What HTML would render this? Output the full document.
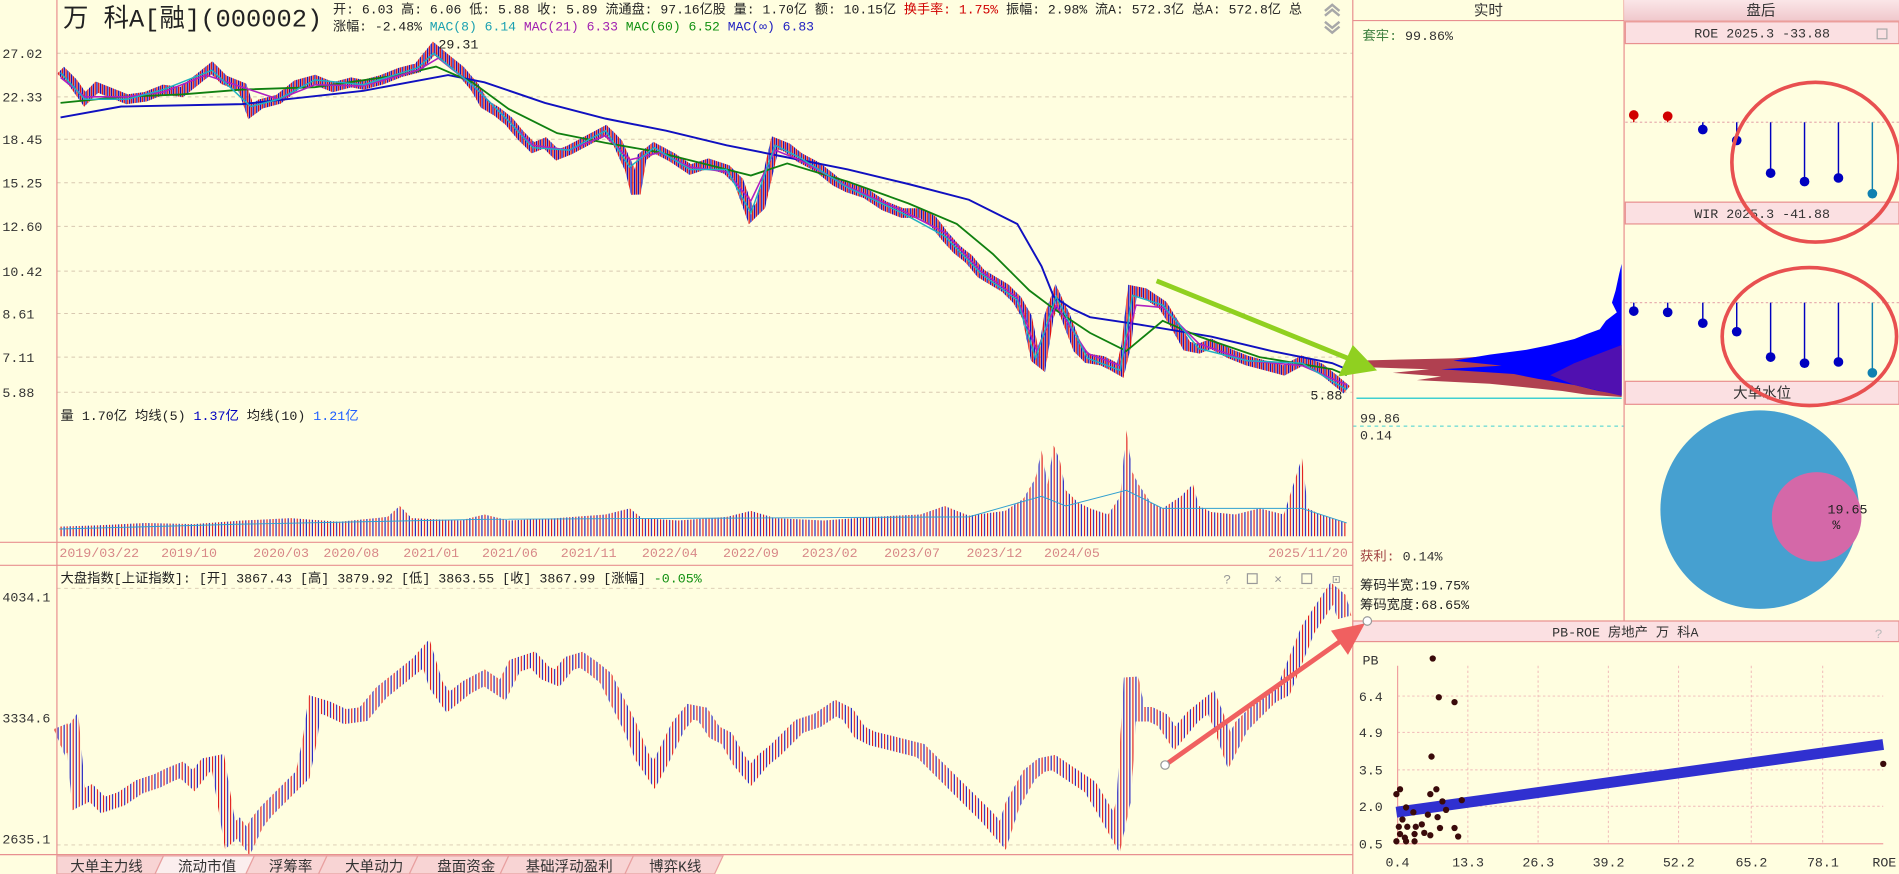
<!DOCTYPE html>
<html><head><meta charset="utf-8"><style>
html,body{margin:0;padding:0;background:#fffee0;overflow:hidden}
svg{display:block}
text{font-family:"Liberation Mono","Noto Sans CJK SC",monospace}
</style></head><body>
<svg width="1899" height="874" viewBox="0 0 1568 722" preserveAspectRatio="none" xmlns="http://www.w3.org/2000/svg">
<defs>
<pattern id="st" patternUnits="userSpaceOnUse" x="0" y="0" width="3" height="722"><rect x="0" y="0" width="1.1" height="722" fill="#e01010"/><rect x="1.5" y="0" width="1.1" height="722" fill="#1010c0"/></pattern>
<pattern id="st2" patternUnits="userSpaceOnUse" x="0" y="0" width="5" height="722"><rect x="0" y="0" width="0.9" height="722" fill="#e01010"/><rect x="2.5" y="0" width="0.9" height="722" fill="#1010c0"/></pattern>
<linearGradient id="pk" x1="0" y1="0" x2="0" y2="1"><stop offset="0" stop-color="#fbe6e8"/><stop offset="1" stop-color="#f0c8cc"/></linearGradient>
</defs>
<rect width="1568" height="722" fill="#fffee0"/>
<g stroke="#d8c8b0" stroke-dasharray="3,3" stroke-width="0.8">
<line x1="47" y1="44" x2="1117" y2="44"/><line x1="47" y1="80" x2="1117" y2="80"/><line x1="47" y1="115" x2="1117" y2="115"/><line x1="47" y1="151" x2="1117" y2="151"/><line x1="47" y1="187" x2="1117" y2="187"/><line x1="47" y1="224" x2="1117" y2="224"/><line x1="47" y1="259" x2="1117" y2="259"/><line x1="47" y1="295" x2="1117" y2="295"/><line x1="47" y1="324" x2="1117" y2="324"/>
<line x1="47" y1="486" x2="1117" y2="486"/><line x1="47" y1="698" x2="1117" y2="698"/>
<line x1="1117" y1="352" x2="1341" y2="352" stroke="#40d0d0"/>
</g>
<g font-size="11" fill="#333">
<text x="2" y="48">27.02</text><text x="2" y="84">22.33</text><text x="2" y="119">18.45</text><text x="2" y="155">15.25</text><text x="2" y="191">12.60</text><text x="2" y="228">10.42</text><text x="2" y="263">8.61</text><text x="2" y="299">7.11</text><text x="2" y="328">5.88</text>
<text x="2" y="497">4034.1</text><text x="2" y="597">3334.6</text><text x="2" y="697">2635.1</text>
</g>
<path d="M50 58 L60 68 L70 82 L80 72 L90 76 L105 82 L120 80 L135 74 L150 76 L165 64 L175 56 L185 66 L200 72 L207 92 L215 86 L230 82 L245 70 L260 66 L275 72 L290 68 L300 70 L315 66 L330 60 L345 56 L358 40 L370 50 L380 58 L392 72 L400 86 L410 92 L420 100 L430 112 L440 122 L450 118 L460 128 L470 124 L485 116 L500 108 L510 118 L520 140 L525 160 L530 130 L540 122 L555 130 L570 140 L585 135 L600 140 L610 150 L620 178 L628 170 L640 118 L650 122 L660 130 L675 138 L690 150 L700 155 L715 160 L730 170 L745 176 L760 176 L770 182 L780 195 L790 206 L800 214 L810 226 L820 232 L830 238 L840 248 L848 262 L855 296 L860 300 L866 262 L872 245 L880 262 L890 288 L898 296 L910 298 L918 302 L925 306 L930 285 L935 240 L945 242 L960 252 L970 268 L980 286 L990 288 L1000 284 L1015 292 L1030 298 L1045 302 L1060 306 L1075 298 L1090 304 L1100 312 L1112 322" stroke="url(#st)" stroke-width="8" fill="none"/>
<polyline points="50,97 100,88 200,86 300,75 370,62 400,68 450,85 500,98 550,108 600,120 650,130 700,140 750,152 800,165 840,185 860,220 870,245 885,255 900,262 940,268 1000,278 1050,290 1100,300 1112,305" stroke="#1010c0" stroke-width="1.6" fill="none"/>
<polyline points="50,85 100,80 150,78 200,74 260,72 330,62 360,55 390,68 420,90 460,110 500,118 540,125 580,135 620,145 650,135 700,150 750,168 790,185 820,210 850,240 870,255 900,275 930,290 960,265 990,278 1040,295 1100,305 1112,310" stroke="#108010" stroke-width="1.5" fill="none"/>
<polyline points="50,64 70,80 105,80 135,76 170,62 200,72 230,82 260,70 300,71 345,58 362,48 392,72 420,100 440,120 470,124 500,112 520,132 545,126 570,138 600,142 620,166 640,124 660,132 700,154 745,174 780,192 810,224 840,246 856,290 872,252 898,292 925,302 938,252 960,254 990,284 1030,298 1075,302 1112,318" stroke="#b020c0" stroke-width="1.3" fill="none"/>
<polyline points="50,60 70,82 105,82 135,74 175,58 207,88 230,82 260,66 300,70 345,56 358,44 392,72 420,100 440,122 470,124 500,108 520,138 540,122 570,140 600,140 620,176 640,120 660,130 700,155 745,176 780,195 810,226 840,248 855,296 872,245 898,296 925,306 935,244 960,252 990,288 1030,298 1075,300 1112,322" stroke="#20b0c0" stroke-width="1.2" fill="none"/>
<polygon points="49,435 80,434 120,432 160,433 200,430 240,428 280,431 320,427 330,418 340,428 380,430 400,425 420,430 460,428 500,425 520,420 530,428 560,430 600,427 620,422 640,428 680,430 720,427 760,425 780,418 800,426 830,422 845,412 855,395 860,372 865,400 870,368 875,380 880,405 890,415 900,420 915,425 925,410 930,355 935,390 940,400 950,415 960,420 975,410 985,400 990,418 1000,423 1020,425 1040,420 1060,425 1075,378 1080,420 1090,425 1100,428 1112,432 1112,443 49,443" fill="url(#st2)"/>
<polyline points="49,437 200,433 400,429 600,428 800,427 860,410 880,418 930,405 960,420 1075,420 1112,432" stroke="#30a0d0" stroke-width="0.8" fill="none"/>
<path d="M50 600 L55 612 L60 605 L65 660 L75 655 L85 665 L100 660 L115 650 L130 645 L140 640 L150 636 L160 645 L170 632 L180 630 L185 660 L190 690 L197 684 L205 695 L212 680 L220 670 L235 655 L250 640 L256 610 L260 582 L270 585 L285 592 L300 590 L315 572 L330 560 L345 548 L352 540 L360 566 L370 580 L385 568 L400 560 L415 570 L425 550 L440 545 L450 556 L460 560 L470 548 L480 545 L490 552 L500 560 L510 580 L520 600 L530 625 L540 640 L548 625 L560 600 L570 588 L580 590 L590 605 L600 610 L610 628 L620 640 L630 628 L640 620 L650 610 L660 600 L675 595 L690 585 L700 590 L710 605 L720 610 L740 615 L760 620 L775 635 L790 650 L800 660 L815 675 L828 690 L836 665 L850 640 L860 632 L870 630 L885 640 L900 650 L912 670 L922 688 L928 660 L934 560 L940 590 L950 590 L960 595 L970 610 L985 592 L1000 580 L1008 600 L1015 620 L1025 600 L1040 585 L1050 575 L1060 570 L1070 545 L1080 520 L1090 505 L1100 490 L1106 495 L1110 510" stroke="url(#st2)" stroke-width="12" fill="none"/>
<polygon points="1339,288 1290,290 1250,293 1200,296 1117,298 1117,303 1180,305 1150,308 1190,311 1170,314 1230,317 1260,320 1290,323 1310,326 1339,328" fill="#b04050"/>
<polygon points="1339,218 1337,226 1334,240 1331,250 1335,258 1326,265 1321,272 1310,276 1300,280 1280,285 1260,289 1230,293 1200,298 1240,302 1190,305 1250,309 1270,313 1300,318 1320,323 1339,326" fill="#0000ff"/>
<polygon points="1339,285 1300,300 1280,310 1300,318 1330,325 1339,327" fill="#5010b0"/>
<line x1="1120" y1="329" x2="1339" y2="329" stroke="#40d0d0" stroke-width="1.2"/>
<g stroke="#e89090" stroke-width="1" fill="none">
<line x1="47" y1="0" x2="47" y2="722"/><line x1="1117" y1="0" x2="1117" y2="722"/><line x1="1341" y1="0" x2="1341" y2="513"/>
<line x1="0" y1="448" x2="1117" y2="448"/><line x1="0" y1="467" x2="1117" y2="467"/><line x1="0" y1="706" x2="1117" y2="706"/><line x1="1117" y1="17" x2="1568" y2="17"/>
</g>
<text x="52" y="22" font-size="21" fill="#222" font-family="Liberation Serif,Noto Serif CJK SC,serif">万 科A[融](000002)</text>
<text x="275" y="11" font-size="10.8" fill="#222" textLength="800" lengthAdjust="spacingAndGlyphs">开: 6.03 高: 6.06 低: 5.88 收: 5.89 流通盘: 97.16亿股 量: 1.70亿 额: 10.15亿 <tspan fill="#d00000">换手率: 1.75%</tspan> 振幅: 2.98% 流A: 572.3亿 总A: 572.8亿 总</text>
<text x="275" y="25" font-size="10.8" fill="#222">涨幅: -2.48% <tspan fill="#1aa0b0">MAC(8) 6.14</tspan> <tspan fill="#a020b0">MAC(21) 6.33</tspan> <tspan fill="#109010">MAC(60) 6.52</tspan> <tspan fill="#2020c0">MAC(∞) 6.83</tspan></text>
<text x="362" y="40" font-size="11" fill="#222">29.31</text>
<text x="1082" y="330" font-size="11" fill="#222">5.88</text>
<g stroke="#a8a8a8" stroke-width="2" fill="none"><path d="M1094 9 L1100 4 L1106 9 M1094 13 L1100 8 L1106 13"/><path d="M1094 18 L1100 23 L1106 18 M1094 22 L1100 27 L1106 22"/></g>
<text x="50" y="347" font-size="11" fill="#222">量 1.70亿 均线(5) <tspan fill="#0000c0">1.37亿</tspan> 均线(10) <tspan fill="#2060ff">1.21亿</tspan></text>
<g font-size="11" fill="#d88888">
<text x="49" y="460">2019/03/22</text><text x="133" y="460">2019/10</text><text x="209" y="460">2020/03</text><text x="267" y="460">2020/08</text><text x="333" y="460">2021/01</text><text x="398" y="460">2021/06</text><text x="463" y="460">2021/11</text><text x="530" y="460">2022/04</text><text x="597" y="460">2022/09</text><text x="662" y="460">2023/02</text><text x="730" y="460">2023/07</text><text x="798" y="460">2023/12</text><text x="862" y="460">2024/05</text><text x="1047" y="460">2025/11/20</text>
</g>
<text x="50" y="481" font-size="11" fill="#222">大盘指数[上证指数]: [开] 3867.43 [高] 3879.92 [低] 3863.55 [收] 3867.99 [涨幅] <tspan fill="#109010">-0.05%</tspan></text>
<g font-size="11" fill="#999"><text x="1010" y="482">?</text><rect x="1030" y="474" width="8" height="8" fill="none" stroke="#999"/><text x="1052" y="482">×</text><rect x="1075" y="474" width="8" height="8" fill="none" stroke="#999"/><text x="1100" y="482">⊡</text></g>
<g font-size="12" fill="#333">
<path d="M47 707 H135 L128 722 H47 Z" fill="#f8d4d4" stroke="#e8a0a0"/>
<path d="M135 707 H210 L203 722 H128 Z" fill="#fbeeee" stroke="#e8a0a0"/>
<path d="M210 707 H270 L263 722 H203 Z" fill="#f8d4d4" stroke="#e8a0a0"/>
<path d="M270 707 H345 L338 722 H263 Z" fill="#f8d4d4" stroke="#e8a0a0"/>
<path d="M345 707 H420 L413 722 H338 Z" fill="#f8d4d4" stroke="#e8a0a0"/>
<path d="M420 707 H523 L516 722 H413 Z" fill="#f8d4d4" stroke="#e8a0a0"/>
<path d="M523 707 H597 L590 722 H516 Z" fill="#f8d4d4" stroke="#e8a0a0"/>
<text x="58" y="720">大单主力线</text><text x="147" y="720">流动市值</text><text x="222" y="720">浮筹率</text><text x="285" y="720">大单动力</text><text x="361" y="720">盘面资金</text><text x="434" y="720">基础浮动盈利</text><text x="536" y="720">博弈K线</text>
</g>
<rect x="1341" y="0" width="227" height="17" fill="url(#pk)"/>
<text x="1229" y="13" text-anchor="middle" font-size="12" fill="#333">实时</text>
<text x="1454" y="13" text-anchor="middle" font-size="12" fill="#333">盘后</text>
<g stroke="#e89090" fill="#fbe0e2">
<rect x="1342" y="18" width="226" height="18"/><rect x="1342" y="167" width="226" height="18"/><rect x="1342" y="315" width="226" height="19"/><rect x="1117" y="513" width="451" height="17"/>
</g>
<g font-size="11" fill="#333" text-anchor="middle">
<text x="1455" y="31">ROE 2025.3 -33.88</text><text x="1455" y="180">WIR 2025.3 -41.88</text><text x="1455" y="329" font-size="12">大单水位</text><text x="1342" y="526">PB-ROE 房地产 万 科A</text>
</g>
<rect x="1550" y="24" width="8" height="8" fill="none" stroke="#aaa"/>
<text x="1548" y="527" font-size="11" fill="#bbb">?</text>
<g stroke="#e8b0b0" stroke-dasharray="2,2"><line x1="1342" y1="101" x2="1568" y2="101"/><line x1="1342" y1="250" x2="1568" y2="250"/></g>
<g stroke-width="1.2">
<line x1="1349" y1="101" x2="1349" y2="95" stroke="#d00000"/><circle cx="1349" cy="95" r="4" fill="#d00000"/>
<line x1="1377" y1="101" x2="1377" y2="96" stroke="#d00000"/><circle cx="1377" cy="96" r="4" fill="#d00000"/>
<line x1="1406" y1="101" x2="1406" y2="107" stroke="#0000c0"/><circle cx="1406" cy="107" r="4" fill="#0000c0"/>
<line x1="1434" y1="101" x2="1434" y2="116" stroke="#0000c0"/><circle cx="1434" cy="116" r="4" fill="#0000c0"/>
<line x1="1462" y1="101" x2="1462" y2="143" stroke="#0000c0"/><circle cx="1462" cy="143" r="4" fill="#0000c0"/>
<line x1="1490" y1="101" x2="1490" y2="150" stroke="#0000c0"/><circle cx="1490" cy="150" r="4" fill="#0000c0"/>
<line x1="1518" y1="101" x2="1518" y2="147" stroke="#0000c0"/><circle cx="1518" cy="147" r="4" fill="#0000c0"/>
<line x1="1546" y1="101" x2="1546" y2="160" stroke="#1080b0"/><circle cx="1546" cy="160" r="4" fill="#1080b0"/>
<line x1="1349" y1="250" x2="1349" y2="257" stroke="#0000c0"/><circle cx="1349" cy="257" r="4" fill="#0000c0"/>
<line x1="1377" y1="250" x2="1377" y2="258" stroke="#0000c0"/><circle cx="1377" cy="258" r="4" fill="#0000c0"/>
<line x1="1406" y1="250" x2="1406" y2="267" stroke="#0000c0"/><circle cx="1406" cy="267" r="4" fill="#0000c0"/>
<line x1="1434" y1="250" x2="1434" y2="274" stroke="#0000c0"/><circle cx="1434" cy="274" r="4" fill="#0000c0"/>
<line x1="1462" y1="250" x2="1462" y2="295" stroke="#0000c0"/><circle cx="1462" cy="295" r="4" fill="#0000c0"/>
<line x1="1490" y1="250" x2="1490" y2="300" stroke="#0000c0"/><circle cx="1490" cy="300" r="4" fill="#0000c0"/>
<line x1="1518" y1="250" x2="1518" y2="299" stroke="#0000c0"/><circle cx="1518" cy="299" r="4" fill="#0000c0"/>
<line x1="1546" y1="250" x2="1546" y2="308" stroke="#1080b0"/><circle cx="1546" cy="308" r="4" fill="#1080b0"/>
</g>
<text x="1125" y="33" font-size="11" fill="#408040">套牢: <tspan fill="#333">99.86%</tspan></text>
<text x="1123" y="349" font-size="11" fill="#333">99.86</text><text x="1123" y="363" font-size="11" fill="#333">0.14</text>
<text x="1123" y="463" font-size="11" fill="#a04040">获利: <tspan fill="#333">0.14%</tspan></text>
<text x="1123" y="487" font-size="11" fill="#222">筹码半宽:19.75%</text>
<text x="1123" y="503" font-size="11" fill="#222">筹码宽度:68.65%</text>
<circle cx="1453" cy="421" r="82" fill="#46a0d0"/>
<circle cx="1500" cy="427" r="37" fill="#d468a8"/>
<text x="1509" y="424" font-size="11" fill="#222">19.65</text><text x="1513" y="437" font-size="11" fill="#222">%</text>
<g stroke="#f0b8b8" stroke-dasharray="2,2" stroke-width="0.8">
<line x1="1212" y1="550" x2="1212" y2="697"/><line x1="1270" y1="550" x2="1270" y2="697"/><line x1="1328" y1="550" x2="1328" y2="697"/><line x1="1386" y1="550" x2="1386" y2="697"/><line x1="1446" y1="550" x2="1446" y2="697"/><line x1="1505" y1="550" x2="1505" y2="697"/>
<line x1="1154" y1="575" x2="1555" y2="575"/><line x1="1154" y1="605" x2="1555" y2="605"/><line x1="1154" y1="636" x2="1555" y2="636"/><line x1="1154" y1="666" x2="1555" y2="666"/>
</g>
<g stroke="#f0a0a0"><line x1="1154" y1="550" x2="1154" y2="697"/><line x1="1154" y1="697" x2="1555" y2="697"/></g>
<g font-size="11" fill="#333">
<text x="1125" y="549">PB</text><text x="1122" y="579">6.4</text><text x="1122" y="609">4.9</text><text x="1122" y="640">3.5</text><text x="1122" y="670">2.0</text><text x="1122" y="701">0.5</text>
<text x="1144" y="716">0.4</text><text x="1199" y="716">13.3</text><text x="1257" y="716">26.3</text><text x="1315" y="716">39.2</text><text x="1373" y="716">52.2</text><text x="1433" y="716">65.2</text><text x="1492" y="716">78.1</text><text x="1546" y="716">ROE</text>
</g>
<line x1="1153" y1="671" x2="1555" y2="615" stroke="#3030d0" stroke-width="9"/>
<g fill="#3a0a0a">
<circle cx="1183" cy="544" r="2.6"/><circle cx="1188" cy="576" r="2.6"/><circle cx="1201" cy="580" r="2.6"/><circle cx="1182" cy="625" r="2.6"/><circle cx="1555" cy="631" r="2.6"/><circle cx="1156" cy="652" r="2.6"/><circle cx="1153" cy="656" r="2.6"/><circle cx="1186" cy="652" r="2.6"/><circle cx="1181" cy="656" r="2.6"/><circle cx="1161" cy="667" r="2.6"/><circle cx="1191" cy="662" r="2.6"/><circle cx="1207" cy="661" r="2.6"/><circle cx="1167" cy="671" r="2.6"/><circle cx="1179" cy="673" r="2.6"/><circle cx="1194" cy="669" r="2.6"/><circle cx="1187" cy="675" r="2.6"/><circle cx="1158" cy="677" r="2.6"/><circle cx="1155" cy="683" r="2.6"/><circle cx="1162" cy="683" r="2.6"/><circle cx="1169" cy="683" r="2.6"/><circle cx="1174" cy="681" r="2.6"/><circle cx="1189" cy="684" r="2.6"/><circle cx="1201" cy="684" r="2.6"/><circle cx="1156" cy="689" r="2.6"/><circle cx="1168" cy="689" r="2.6"/><circle cx="1176" cy="688" r="2.6"/><circle cx="1181" cy="690" r="2.6"/><circle cx="1204" cy="691" r="2.6"/><circle cx="1153" cy="695" r="2.6"/><circle cx="1161" cy="695" r="2.6"/><circle cx="1168" cy="695" r="2.6"/><circle cx="1160" cy="692" r="2.6"/>
</g>
<line x1="955" y1="232" x2="1118" y2="298" stroke="#90d020" stroke-width="4"/>
<polygon points="1137,306 1105,311 1117,285" fill="#90d020"/>
<line x1="962" y1="632" x2="1112" y2="526" stroke="#f06060" stroke-width="4"/>
<polygon points="1127,515 1113,541 1099,521" fill="#f06060"/>
<circle cx="962" cy="632" r="3.5" fill="#fff" stroke="#999"/>
<circle cx="1129" cy="513" r="3.5" fill="#fff" stroke="#999"/>
<ellipse cx="1499" cy="134" rx="69" ry="66" fill="none" stroke="#e85050" stroke-width="3"/>
<ellipse cx="1494" cy="278" rx="72" ry="57" fill="none" stroke="#e85050" stroke-width="3"/>
</svg>
</body></html>
